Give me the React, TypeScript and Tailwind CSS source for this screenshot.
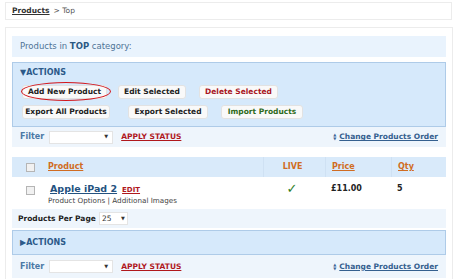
import React from 'react'

const FONT = { fontFamily: '"DejaVu Sans", Verdana, sans-serif' }

function Btn({ label, w, ml, color = 'text-[#222]' }: { label: string; w: string; ml: string; color?: string }) {
  return (
    <div className={`${w} ${ml} h-[14px] flex items-center justify-center rounded-[3px] border border-[#e2e2e2] bg-[#f9f9f9] text-[7.5px] font-bold ${color}`}>
      {label}
    </div>
  )
}

function FilterRow({ h = 'h-[20px]' }: { h?: string }) {
  return (
    <div className={`${h} bg-[#eef5fc] flex items-center pl-[8px] pr-[8px]`}>
      <span className="text-[8px] font-bold text-[#4b78a6]">Filter</span>
      <div className="ml-[5px] w-[64px] h-[13px] bg-white border border-[#e4e4e4] flex items-center justify-end pr-[4px]">
        <span className="text-[5px] text-[#333]">▼</span>
      </div>
      <a className="ml-[8px] text-[7.5px] font-bold text-[#b0181c] underline">APPLY STATUS</a>
      <div className="ml-auto flex items-center">
        <span className="flex flex-col leading-none text-[#3b6394] text-[4px] mr-[3px]">
          <span>▲</span>
          <span>▼</span>
        </span>
        <a className="text-[7.5px] font-bold text-[#35608f] underline">Change Products Order</a>
      </div>
    </div>
  )
}

export default function App() {
  return (
    <div className="w-[456px] h-[279px] bg-white overflow-hidden pt-[2px]" style={FONT}>
      {/* breadcrumb */}
      <div className="mx-[5px] w-[447px] h-[18px] border border-[#ececec] flex items-center pl-[6px] text-[7.5px] text-[#555]">
        <a className="font-bold text-[#333] underline">Products</a>
        <span className="ml-[4px]">&gt; Top</span>
      </div>

      {/* main panel */}
      <div className="mx-[5px] mt-[7px] w-[448px] h-[260px] border border-[#ececec] pt-[8px] px-[6px]">
        <div className="h-[21px] bg-[#e9f3fd] flex items-center pl-[8px] text-[8.5px] text-[#4f7497]">
          Products in&nbsp;<b className="text-[#2a5883]">TOP</b>&nbsp;category:
        </div>

        {/* actions */}
        <div className="relative mt-[5px] h-[65px] bg-[#d6e9fb] border border-[#aecbe8] pt-[5px]">
          <div className="pl-[7px] text-[8px] font-bold text-[#2c5a89] leading-[10px]">▼ACTIONS</div>
          <div className="flex mt-[7px]">
            <Btn label="Add New Product" w="w-[85px]" ml="ml-[9px]" />
            <Btn label="Edit Selected" w="w-[68px]" ml="ml-[11px]" />
            <Btn label="Delete Selected" w="w-[79px]" ml="ml-[13px]" color="text-[#a8151c]" />
          </div>
          <div className="flex mt-[6px]">
            <Btn label="Export All Products" w="w-[88px]" ml="ml-[9px]" />
            <Btn label="Export Selected" w="w-[80px]" ml="ml-[18px]" />
            <Btn label="Import Products" w="w-[82px]" ml="ml-[13px]" color="text-[#2f6b1c]" />
          </div>
          {/* red highlight ellipse */}
          <div className="absolute left-[8px] top-[19px] w-[90px] h-[19px] rounded-[50%] border-[1.5px] border-[#d3151b]" />
        </div>

        <FilterRow />

        {/* table */}
        <div className="mt-[10px] h-[20px] bg-[#d9eafa] flex items-center text-[8px] font-bold">
          <div className="w-[36px] flex justify-center">
            <div className="w-[9px] h-[9px] border border-[#b5b5b5] bg-[#f1f1f1]" />
          </div>
          <a className="text-[#d06c22] underline">Product</a>
          <div className="ml-auto h-full flex">
            <div className="w-[62px] h-full border-l border-[#cfe1f3] flex items-center justify-center pr-[4px] text-[#d06c22]">LIVE</div>
            <div className="w-[66px] h-full border-l border-[#cfe1f3] flex items-center pl-[6px]">
              <a className="text-[#d06c22] underline">Price</a>
            </div>
            <div className="w-[55px] h-full border-l border-[#cfe1f3] flex items-center pl-[6px]">
              <a className="text-[#d06c22] underline">Qty</a>
            </div>
          </div>
        </div>
        <div className="h-[30px] flex items-start pt-[6px]">
          <div className="w-[36px] flex justify-center pt-[3px]">
            <div className="w-[9px] h-[9px] border border-[#b5b5b5] bg-[#f1f1f1]" />
          </div>
          <div className="flex flex-col">
            <div className="flex items-baseline leading-[12px]">
              <a className="ml-[2px] text-[9.5px] font-bold text-[#24527f] underline">Apple iPad 2</a>
              <a className="ml-[5px] text-[7px] font-bold text-[#b0181c] underline">EDIT</a>
            </div>
            <div className="text-[7.2px] text-[#444] leading-[10px]">Product Options | Additional Images</div>
          </div>
          <div className="ml-auto flex text-[8px] font-bold text-[#222]">
            <div className="w-[62px] flex justify-center pr-[4px] text-[#2e7d1e] text-[13px] leading-[12px]">✓</div>
            <div className="w-[66px] pl-[6px] leading-[12px]">£11.00</div>
            <div className="w-[55px] pl-[6px] leading-[12px]">5</div>
          </div>
        </div>

        <div className="mt-[2px] h-[19px] bg-[#eef5fc] flex items-center pl-[6px]">
          <span className="text-[7.5px] font-bold text-[#222]">Products Per Page</span>
          <div className="ml-[3px] w-[29px] h-[13px] bg-white border border-[#e4e4e4] flex items-center justify-between px-[2px]">
            <span className="text-[7.5px] text-[#333]">25</span>
            <span className="text-[5px] text-[#333]">▼</span>
          </div>
        </div>

        <div className="mt-[2px] h-[25px] bg-[#d6e9fb] border border-[#aecbe8] flex items-center pl-[7px] text-[8px] font-bold text-[#2c5a89]">
          ▶ACTIONS
        </div>

        <FilterRow h="h-[23px]" />
      </div>
    </div>
  )
}
